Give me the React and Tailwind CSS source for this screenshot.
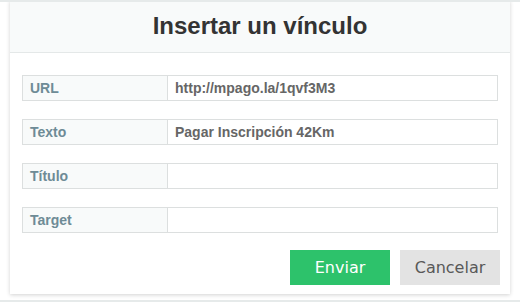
import React from "react";

function Row({ label, value }) {
  return (
    <div className="flex h-[26px] border border-[#dcdfdf] box-border">
      <div className="w-[145px] shrink-0 bg-[#f8fafa] border-r border-[#dcdfdf] flex items-center pl-[7px] text-[14px] font-bold text-[#6e8b96]">
        {label}
      </div>
      <div className="flex-1 bg-white flex items-center pl-[7px] text-[14px] font-bold text-[#666666]">
        {value}
      </div>
    </div>
  );
}

export default function App() {
  return (
    <div
      className="h-[304px] w-[520px] bg-white border-t-2 border-[#e6eaea] box-border overflow-hidden"
      style={{ fontFamily: '"Liberation Sans", Arial, sans-serif' }}
    >
      <div className="-mt-[2px] mx-[10px] w-[500px] h-[294px] bg-white shadow-[0_1px_4px_rgba(0,0,0,0.18)] flex flex-col relative">
        <div className="h-[53px] bg-[#f8fafa] border-b border-[#e4e8e8] flex items-center justify-center box-border">
          <span className="text-[24px] font-bold text-[#333333] leading-none">Insertar un vínculo</span>
        </div>
        <div className="px-[12px] pt-[22px] flex flex-col gap-[18px]">
          <Row label="URL" value="http://mpago.la/1qvf3M3" />
          <Row label="Texto" value="Pagar Inscripción 42Km" />
          <Row label="Título" value="" />
          <Row label="Target" value="" />
        </div>
        <div className="flex justify-end gap-[10px] pr-[10px] pt-[17px]">
          <button
            className="w-[100px] h-[35px] bg-[#2dc26b] text-white text-[16px]"
            style={{ fontFamily: '"DejaVu Sans", sans-serif' }}
          >
            Enviar
          </button>
          <button
            className="w-[100px] h-[35px] bg-[#e3e3e3] text-[#595959] text-[16px]"
            style={{ fontFamily: '"DejaVu Sans", sans-serif' }}
          >
            Cancelar
          </button>
        </div>
      </div>
      <div className="mt-[6px] h-[2px] bg-[#e6eaea]" />
    </div>
  );
}
